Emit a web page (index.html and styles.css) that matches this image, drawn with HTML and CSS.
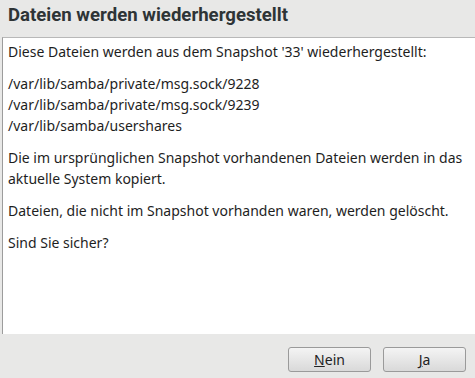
FILE: index.html
```html
<!DOCTYPE html>
<html>
<head>
  <title>Dateien werden wiederhergestellt</title>
  <link rel="stylesheet" href="styles.css">
</head>
<body>
  <div class="dialog">
    <h1 class="title">Dateien werden wiederhergestellt</h1>
    <div class="content">
      <p>Diese Dateien werden aus dem Snapshot '33' wiederhergestellt:</p>
      <p>/var/lib/samba/private/msg.sock/9228<br>
        /var/lib/samba/private/msg.sock/9239<br>
        /var/lib/samba/usershares</p>
      <p>Die im ursprünglichen Snapshot vorhandenen Dateien werden in das aktuelle System kopiert.</p>
      <p>Dateien, die nicht im Snapshot vorhanden waren, werden gelöscht.</p>
      <p>Sind Sie sicher?</p>
    </div>
    <div class="buttons">
      <button class="btn"><u>N</u>ein</button>
      <button class="btn"><u>J</u>a</button>
    </div>
  </div>
</body>
</html>
```

FILE: styles.css
```css
html, body {
  margin: 0;
  height: 100%;
}
body {
  background-color: #e8e8e7;
  font-family: "Noto Sans", "Open Sans", sans-serif;
  color: #1e1e1e;
}
.dialog {
  display: flex;
  flex-direction: column;
  height: 100%;
}
.title {
  margin: 0;
  padding: 4px 8px 0 8px;
  height: 33px;
  font-family: Roboto, "Noto Sans", sans-serif;
  font-size: 18.6px;
  font-weight: bold;
  color: #2e3436;
}
.content {
  background-color: #fff;
  margin-left: 2px;
  border-left: 1px solid #9c9c9c;
  border-top: 1px solid #b8b8b8;
  padding: 3px 8px 0 5px;
  height: 293px;
  font-size: 14px;
  line-height: 21px;
}
.content p {
  margin: 0 0 11px 0;
}
.buttons {
  display: flex;
  justify-content: flex-end;
  gap: 12px;
  padding: 13px 9px 0 0;
}
.btn {
  width: 83px;
  height: 25px;
  font-family: "Noto Sans", sans-serif;
  font-size: 14px;
  color: #222;
  background: linear-gradient(#f4f4f4, #d9d9d9);
  border: 1px solid #9a9a9a;
  border-radius: 3px;
  padding: 0;
}
```
